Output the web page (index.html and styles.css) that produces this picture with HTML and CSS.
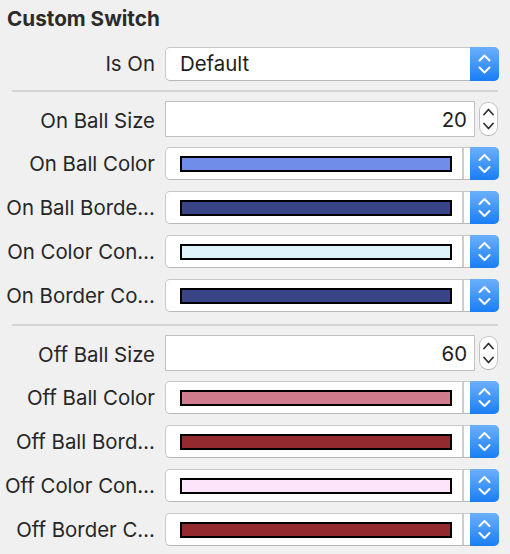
FILE: index.html
```html
<!DOCTYPE html>
<html>
<head>
<meta charset="utf-8">
<title>Custom Switch</title>
<link rel="stylesheet" href="styles.css">
</head>
<body>
<div class="inspector">
  <div class="title">Custom Switch</div>

  <div class="row row-popup">
    <div class="label">Is On</div>
    <div class="popup">
      <span class="popup-text">Default</span>
      <span class="blue-btn">
        <svg width="29" height="34" viewBox="0 0 29 34"><polyline points="9.5,13.5 14.5,8.5 19.5,13.5" class="chev-w"/><polyline points="9.5,20.5 14.5,25.5 19.5,20.5" class="chev-w"/></svg>
      </span>
    </div>
  </div>

  <div class="sep"></div>

  <div class="row row-field">
    <div class="label">On Ball Size</div>
    <div class="spin">
      <div class="field">20</div>
      <div class="stepper">
        <svg width="17" height="32" viewBox="0 0 17 32"><polyline points="4,11.5 8.5,6.5 13,11.5" class="chev-d"/><polyline points="4,20.5 8.5,25.5 13,20.5" class="chev-d"/></svg>
      </div>
    </div>
  </div>

  <div class="row row-color">
    <div class="label">On Ball Color</div>
    <div class="well">
      <div class="well-area"><div class="swatch" style="background:#6f8ee9"></div></div>
      <div class="well-div"></div>
      <span class="blue-btn"><svg width="29" height="33" viewBox="0 0 29 33"><polyline points="9.5,13 14.5,8 19.5,13" class="chev-w"/><polyline points="9.5,20 14.5,25 19.5,20" class="chev-w"/></svg></span>
    </div>
  </div>

  <div class="row row-color">
    <div class="label">On Ball Borde…</div>
    <div class="well">
      <div class="well-area"><div class="swatch" style="background:#3c4488"></div></div>
      <div class="well-div"></div>
      <span class="blue-btn"><svg width="29" height="33" viewBox="0 0 29 33"><polyline points="9.5,13 14.5,8 19.5,13" class="chev-w"/><polyline points="9.5,20 14.5,25 19.5,20" class="chev-w"/></svg></span>
    </div>
  </div>

  <div class="row row-color">
    <div class="label">On Color Con…</div>
    <div class="well">
      <div class="well-area"><div class="swatch" style="background:#dff3fc"></div></div>
      <div class="well-div"></div>
      <span class="blue-btn"><svg width="29" height="33" viewBox="0 0 29 33"><polyline points="9.5,13 14.5,8 19.5,13" class="chev-w"/><polyline points="9.5,20 14.5,25 19.5,20" class="chev-w"/></svg></span>
    </div>
  </div>

  <div class="row row-color">
    <div class="label">On Border Co…</div>
    <div class="well">
      <div class="well-area"><div class="swatch" style="background:#3c4488"></div></div>
      <div class="well-div"></div>
      <span class="blue-btn"><svg width="29" height="33" viewBox="0 0 29 33"><polyline points="9.5,13 14.5,8 19.5,13" class="chev-w"/><polyline points="9.5,20 14.5,25 19.5,20" class="chev-w"/></svg></span>
    </div>
  </div>

  <div class="sep"></div>

  <div class="row row-field">
    <div class="label">Off Ball Size</div>
    <div class="spin">
      <div class="field">60</div>
      <div class="stepper">
        <svg width="17" height="32" viewBox="0 0 17 32"><polyline points="4,11.5 8.5,6.5 13,11.5" class="chev-d"/><polyline points="4,20.5 8.5,25.5 13,20.5" class="chev-d"/></svg>
      </div>
    </div>
  </div>

  <div class="row row-color">
    <div class="label">Off Ball Color</div>
    <div class="well">
      <div class="well-area"><div class="swatch" style="background:#cf7d8d"></div></div>
      <div class="well-div"></div>
      <span class="blue-btn"><svg width="29" height="33" viewBox="0 0 29 33"><polyline points="9.5,13 14.5,8 19.5,13" class="chev-w"/><polyline points="9.5,20 14.5,25 19.5,20" class="chev-w"/></svg></span>
    </div>
  </div>

  <div class="row row-color">
    <div class="label">Off Ball Bord…</div>
    <div class="well">
      <div class="well-area"><div class="swatch" style="background:#922a2f"></div></div>
      <div class="well-div"></div>
      <span class="blue-btn"><svg width="29" height="33" viewBox="0 0 29 33"><polyline points="9.5,13 14.5,8 19.5,13" class="chev-w"/><polyline points="9.5,20 14.5,25 19.5,20" class="chev-w"/></svg></span>
    </div>
  </div>

  <div class="row row-color">
    <div class="label">Off Color Con…</div>
    <div class="well">
      <div class="well-area"><div class="swatch" style="background:#fde4fa"></div></div>
      <div class="well-div"></div>
      <span class="blue-btn"><svg width="29" height="33" viewBox="0 0 29 33"><polyline points="9.5,13 14.5,8 19.5,13" class="chev-w"/><polyline points="9.5,20 14.5,25 19.5,20" class="chev-w"/></svg></span>
    </div>
  </div>

  <div class="row row-color">
    <div class="label">Off Border C…</div>
    <div class="well">
      <div class="well-area"><div class="swatch" style="background:#922a2f"></div></div>
      <div class="well-div"></div>
      <span class="blue-btn"><svg width="29" height="33" viewBox="0 0 29 33"><polyline points="9.5,13 14.5,8 19.5,13" class="chev-w"/><polyline points="9.5,20 14.5,25 19.5,20" class="chev-w"/></svg></span>
    </div>
  </div>
</div>
</body>
</html>
```

FILE: styles.css
```css
* { box-sizing: border-box; }

body {
  margin: 0;
  background: #f0f0f0;
  font-family: Inter, "Liberation Sans", Arial, sans-serif;
  color: #262626;
}

.inspector {
  width: 510px;
}

.title {
  height: 45px;
  padding: 7px 0 0 7px;
  font-size: 20.7px;
  line-height: 24px;
  font-weight: 700;
  color: #2b2b2b;
}

.row {
  display: grid;
  grid-template-columns: 155px 334px;
  column-gap: 10px;
  align-items: center;
}

.row-popup { height: 38px; }
.row-field { height: 44px; }
.row-color { height: 44px; align-items: start; }

.label {
  text-align: right;
  font-size: 20.4px;
  line-height: 24px;
  white-space: nowrap;
  overflow: hidden;
  color: #262626;
}

.row-field .label { padding-top: 3px; }
.row-color .label { margin-top: 11px; }

.sep {
  height: 2px;
  background: #d4d4d4;
  margin: 7px 12px 5px 12px;
}

/* popup button */
.popup {
  display: flex;
  height: 34px;
  background: #fff;
  border: 1px solid #c8c8c8;
  border-bottom-color: #b8b8b8;
  border-radius: 5px;
}

.popup-text {
  flex: 1;
  padding-left: 14px;
  font-size: 20.4px;
  line-height: 32px;
  color: #1e1e1e;
}

.blue-btn {
  width: 29px;
  margin: -1px -1px -1px 0;
  background: linear-gradient(#6cb0fc, #1a7df6);
  border-radius: 0 5px 5px 0;
  display: flex;
  align-items: center;
  justify-content: center;
}

.chev-w {
  fill: none;
  stroke: #fff;
  stroke-width: 2;
  stroke-linecap: round;
  stroke-linejoin: round;
}

.chev-d {
  fill: none;
  stroke: #333;
  stroke-width: 1.8;
  stroke-linecap: round;
  stroke-linejoin: round;
}

/* number field + stepper */
.spin {
  display: flex;
  align-items: center;
}

.field {
  width: 310px;
  height: 36px;
  background: #fff;
  border: 1px solid #c2c2c2;
  text-align: right;
  padding: 2px 7px 0 0;
  font-size: 20.4px;
  line-height: 32px;
  color: #1e1e1e;
}

.stepper {
  width: 19px;
  height: 34px;
  margin-left: 4px;
  background: #fff;
  border: 1px solid #c4c4c4;
  border-bottom-color: #b4b4b4;
  border-radius: 9px;
  display: flex;
  align-items: center;
  justify-content: center;
}

/* color well */
.well {
  display: flex;
  height: 33px;
  margin-top: 6px;
  background: #fff;
  border: 1px solid #c8c8c8;
  border-bottom-color: #b8b8b8;
  border-radius: 5px;
}

.well-area {
  flex: 1;
  display: flex;
  align-items: center;
  padding-left: 14px;
}

.swatch {
  width: 272px;
  height: 16px;
  border: 2px solid #000;
}

.well-div {
  width: 2px;
  margin-right: 6px;
  background: #cdcdcd;
}
```
